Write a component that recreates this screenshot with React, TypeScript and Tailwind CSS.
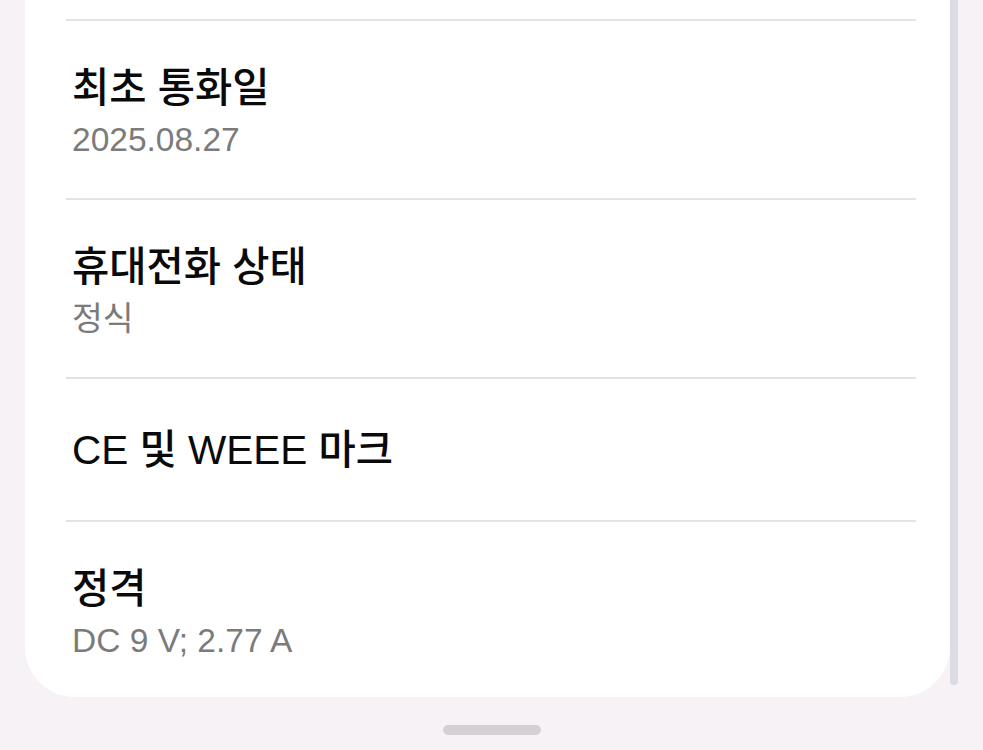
const rows: {title: string; sub?: string}[] = [
    {title: "최초 통화일", sub: "2025.08.27"},
    {title: "휴대전화 상태", sub: "정식"},
    {title: "CE 및 WEEE 마크"},
    {title: "정격", sub: "DC 9 V; 2.77 A"},
];

function InfoRow({title, sub, last}: {title: string; sub?: string; last: boolean}) {
    return (
        <div className={"flex flex-col " + (sub ? "pt-[42px]" : "pt-[46px]") + " " + (last ? "pb-[36px]" : sub ? "pb-[38px]" : "pb-[45px]")}>
            <div className="pl-[6px] text-[40.5px] font-medium leading-[50px] text-[#0a0a0a]">{title}</div>
            {sub && <div className="pl-[6px] mt-[7px] text-[33.5px] leading-[40px] text-[#7b7b7b]">{sub}</div>}
        </div>
    );
}

export default function App() {
    return (
        <div
            className="w-[983px] h-[750px] bg-[#f7f2f6] overflow-hidden flex flex-col"
            style={{fontFamily: "'Liberation Sans', 'Noto Sans CJK KR', sans-serif"}}
        >
            <div className="flex items-start">
                <div className="ml-[25px] w-[925px] bg-white rounded-b-[50px] pt-[19px] pl-[41px] pr-[34px]">
                    {rows.map((row, i) => (
                        <div key={row.title}>
                            <div className="h-[2px] bg-[#e3e3e3]" />
                            <InfoRow title={row.title} sub={row.sub} last={i === rows.length - 1} />
                        </div>
                    ))}
                </div>
                <div className="w-[8px] h-[685px] bg-[#dcdce6] rounded-b-full" />
            </div>
            <div className="flex justify-center mt-[28px]">
                <div className="w-[98px] h-[10px] rounded-full bg-[#d4d0d5]" />
            </div>
        </div>
    );
}
